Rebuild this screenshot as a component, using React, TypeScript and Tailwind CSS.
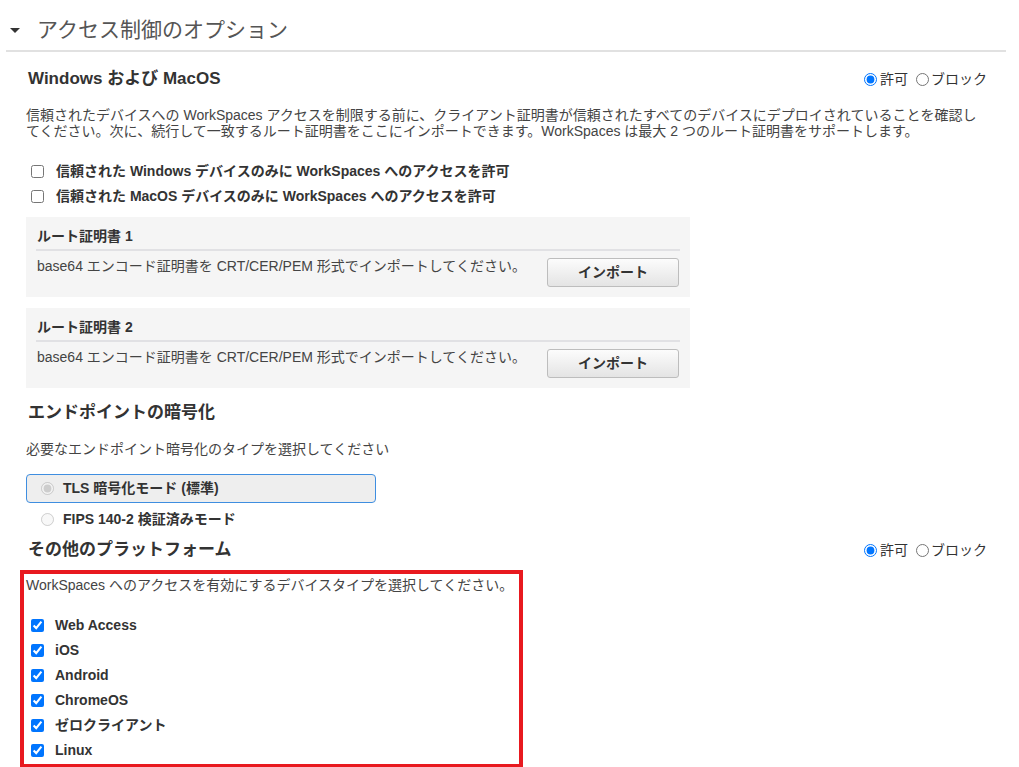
import { useState } from "react"

const font = "font-['Liberation_Sans','Noto_Sans_CJK_JP',sans-serif]"

function AllowBlock({ name }: { name: string }) {
  const [value, setValue] = useState("allow")
  return (
    <div className="flex items-center text-[14px] text-[#333]">
      <label className="flex items-center">
        <input
          type="radio"
          name={name}
          checked={value === "allow"}
          onChange={() => setValue("allow")}
          className="m-0 h-[13px] w-[13px]"
        />
        <span className="ml-[3px]">許可</span>
      </label>
      <label className="ml-[8px] flex items-center">
        <input
          type="radio"
          name={name}
          checked={value === "block"}
          onChange={() => setValue("block")}
          className="m-0 h-[13px] w-[13px]"
        />
        <span className="ml-[2px]">ブロック</span>
      </label>
    </div>
  )
}

function CertPanel({ title }: { title: string }) {
  return (
    <div className="w-[664px] bg-[#f5f5f5] px-[10px] pt-[10px] pb-[10px]">
      <div className="border-b-2 border-[#e1e1e4] pb-[4px] pl-[1px] text-[14px] leading-[18px] font-bold text-[#333]">
        {title}
      </div>
      <div className="flex items-start justify-between pt-[7px] pl-[1px]">
        <p className="text-[14px] leading-[16px] text-[#444]">
          base64 エンコード証明書を CRT/CER/PEM 形式でインポートしてください。
        </p>
        <button className="mr-[1px] h-[29px] w-[132px] rounded-[3px] border border-[#bdbdbd] bg-gradient-to-b from-[#fcfcfc] to-[#e4e4e4] text-[14px] font-bold text-[#333]">
          インポート
        </button>
      </div>
    </div>
  )
}

export default function App() {
  const [trusted, setTrusted] = useState({ windows: false, mac: false })
  const [devices, setDevices] = useState([
    { id: "web", label: "Web Access", checked: true },
    { id: "ios", label: "iOS", checked: true },
    { id: "android", label: "Android", checked: true },
    { id: "chrome", label: "ChromeOS", checked: true },
    { id: "zero", label: "ゼロクライアント", checked: true },
    { id: "linux", label: "Linux", checked: true },
  ])

  return (
    <div className={`${font} min-h-[767px] w-[1019px] bg-white text-[#444]`}>
      {/* section header */}
      <div className="ml-[6px] w-[1000px] border-b-2 border-[#e1e1e1] pt-[16px] pb-[6px] pl-[4px]">
        <div className="flex h-[28px] items-center">
          <span className="h-0 w-0 border-x-[5px] border-t-[5px] border-x-transparent border-t-[#333]" />
          <h2 className="ml-[17px] text-[21px] leading-[28px] text-[#555]">アクセス制御のオプション</h2>
        </div>
      </div>

      <div className="ml-[26px] w-[961px]">
        <div className="mt-[15px] flex h-[24px] items-center justify-between">
          <h3 className="pl-[2px] text-[17px] font-bold text-[#333]">Windows および MacOS</h3>
          <AllowBlock name="winmac" />
        </div>

        <p className="mt-[16px] text-[14px] leading-[16px]">
          信頼されたデバイスへの WorkSpaces アクセスを制限する前に、クライアント証明書が信頼されたすべてのデバイスにデプロイされていることを確認してください。次に、続行して一致するルート証明書をここにインポートできます。WorkSpaces は最大 2 つのルート証明書をサポートします。
        </p>

        <div className="mt-[20px]">
          <label className="flex h-[25px] items-center">
            <input
              type="checkbox"
              checked={trusted.windows}
              onChange={(e) => setTrusted({ ...trusted, windows: e.target.checked })}
              className="m-0 ml-[5px] h-[13px] w-[13px]"
            />
            <span className="ml-[12px] text-[14px] font-bold text-[#333]">
              信頼された Windows デバイスのみに WorkSpaces へのアクセスを許可
            </span>
          </label>
          <label className="flex h-[25px] items-center">
            <input
              type="checkbox"
              checked={trusted.mac}
              onChange={(e) => setTrusted({ ...trusted, mac: e.target.checked })}
              className="m-0 ml-[5px] h-[13px] w-[13px]"
            />
            <span className="ml-[12px] text-[14px] font-bold text-[#333]">
              信頼された MacOS デバイスのみに WorkSpaces へのアクセスを許可
            </span>
          </label>
        </div>

        <div className="mt-[8px] flex flex-col gap-[11px]">
          <CertPanel title="ルート証明書 1" />
          <CertPanel title="ルート証明書 2" />
        </div>

        <h3 className="mt-[13px] flex h-[24px] items-center pl-[2px] text-[17px] font-bold text-[#333]">
          エンドポイントの暗号化
        </h3>
        <p className="mt-[16px] text-[14px] leading-[16px]">必要なエンドポイント暗号化のタイプを選択してください</p>

        <div className="mt-[17px] flex h-[29px] w-[350px] items-center rounded-[4px] border border-[#3f8ee0] bg-[#eeeeee] pl-[14px]">
          <input type="radio" name="enc" checked disabled readOnly className="m-0 h-[13px] w-[13px]" />
          <span className="ml-[9px] text-[14px] font-bold text-[#333]">TLS 暗号化モード (標準)</span>
        </div>
        <div className="mt-[4px] flex h-[24px] items-center pl-[15px]">
          <input type="radio" name="enc" disabled className="m-0 h-[13px] w-[13px]" />
          <span className="ml-[9px] text-[14px] font-bold text-[#333]">FIPS 140-2 検証済みモード</span>
        </div>

        <div className="mt-[7px] flex h-[24px] items-center justify-between">
          <h3 className="pl-[2px] text-[17px] font-bold text-[#333]">その他のプラットフォーム</h3>
          <AllowBlock name="other" />
        </div>

        <div className="mt-[8px] -ml-[6px] w-[503px] border-4 border-[#e8191f] pt-[3px] pb-[1px]">
          <p className="pl-[2px] text-[14px] leading-[16px]">
            WorkSpaces へのアクセスを有効にするデバイスタイプを選択してください。
          </p>
          <div className="mt-[20px]">
            {devices.map((d) => (
              <label key={d.id} className="flex h-[25px] items-center">
                <input
                  type="checkbox"
                  checked={d.checked}
                  onChange={(e) =>
                    setDevices(devices.map((x) => (x.id === d.id ? { ...x, checked: e.target.checked } : x)))
                  }
                  className="m-0 ml-[7px] h-[13px] w-[13px]"
                />
                <span className="ml-[11px] text-[14px] font-bold text-[#333]">{d.label}</span>
              </label>
            ))}
          </div>
        </div>
      </div>
    </div>
  )
}
